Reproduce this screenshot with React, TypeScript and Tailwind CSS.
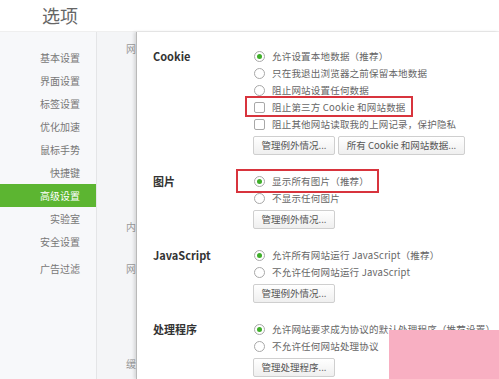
import React from "react";

const font = { fontFamily: '"Noto Sans CJK SC", "Noto Sans", sans-serif' };

function Radio({ checked }: { checked?: boolean }) {
  return (
    <span className="flex h-[11px] w-[11px] shrink-0 items-center justify-center rounded-full border border-[#a8a8a8] bg-white">
      {checked && <span className="h-[5px] w-[5px] rounded-full bg-[#3fae2a]" />}
    </span>
  );
}

function Check() {
  return <span className="h-[11px] w-[11px] shrink-0 rounded-[2px] border border-[#a8a8a8] bg-white" />;
}

function Row({ kind, checked, text, hl }: { kind: "r" | "c"; checked?: boolean; text: string; hl?: "a" | "b" }) {
  return (
    <div className="relative flex h-[17px] items-center gap-[7px] pl-[1px]">
      {kind === "r" ? <Radio checked={checked} /> : <Check />}
      <span className="whitespace-nowrap text-[9.5px] leading-none tracking-[0.2px] text-[#666]">{text}</span>
      {hl === "a" && (
        <div className="pointer-events-none absolute left-[-8px] top-[-3px] h-[21px] w-[168px] border-2 border-[#d8343d]" />
      )}
      {hl === "b" && (
        <div className="pointer-events-none absolute left-[-17px] top-[-4px] h-[24px] w-[143px] border-2 border-[#d8343d]" />
      )}
    </div>
  );
}

function Btn({ children, w }: { children: React.ReactNode; w: string }) {
  return (
    <div
      className={`flex h-[19px] items-center justify-center rounded-[2px] border border-[#cfcfcf] bg-gradient-to-b from-white to-[#efefef] text-[9.5px] leading-none text-[#555] ${w}`}
    >
      {children}
    </div>
  );
}

function Section({ label, children, buttons }: { label: string; children: React.ReactNode; buttons: React.ReactNode }) {
  return (
    <div className="flex">
      <div className="flex h-[17px] w-[100px] shrink-0 items-center text-[11px] font-semibold leading-none text-[#333]">
        {label}
      </div>
      <div className="flex flex-col">
        {children}
        <div className="mt-[3px] flex gap-[3px]">{buttons}</div>
      </div>
    </div>
  );
}

export default function App() {
  const nav = ["基本设置", "界面设置", "标签设置", "优化加速", "鼠标手势", "快捷键", "高级设置", "实验室", "安全设置"];
  return (
    <div className="relative h-[379px] w-[499px] overflow-hidden bg-white" style={font}>
      <div className="h-[32px] border-b border-[#efefef] pl-[42px] pt-[2px] text-[18px] leading-[26px] text-[#666]">选项</div>
      <div className="flex h-[347px]">
        <div className="w-[97px] shrink-0 border-r border-[#e4e5e7] bg-[#f7f8fa] pt-[14px]">
          {nav.map((n) => (
            <div
              key={n}
              className={`flex h-[23px] items-center justify-end pr-[16px] text-[10px] leading-none ${
                n === "高级设置" ? "bg-[#5cb531] text-white" : "text-[#777]"
              }`}
            >
              {n}
            </div>
          ))}
          <div className="mt-[4px] flex h-[23px] items-center justify-end pr-[16px] text-[10px] leading-none text-[#777]">
            广告过滤
          </div>
        </div>
        <div className="w-[39px] shrink-0 overflow-hidden whitespace-nowrap bg-[#f4f5f7] pl-[29px] text-[10px] leading-none text-[#999]">
          <div className="mt-[12px]">网</div>
          <div className="mt-[168px]">内</div>
          <div className="mt-[32px]">网</div>
          <div className="mt-[85px]">缓</div>
        </div>
        <div className="flex-1 border-l border-[#b9b9b9] bg-white pl-[16px] pt-[16px] shadow-[-2px_0_3px_rgba(0,0,0,0.12)]">
          <div className="flex flex-col gap-[18px]">
            <Section
              label="Cookie"
              buttons={
                <>
                  <Btn w="w-[82px]">管理例外情况...</Btn>
                  <Btn w="w-[127px]">所有 Cookie 和网站数据...</Btn>
                </>
              }
            >
              <Row kind="r" checked text="允许设置本地数据（推荐）" />
              <Row kind="r" text="只在我退出浏览器之前保留本地数据" />
              <Row kind="r" text="阻止网站设置任何数据" />
              <Row kind="c" text="阻止第三方 Cookie 和网站数据" hl="a" />
              <Row kind="c" text="阻止其他网站读取我的上网记录，保护隐私" />
            </Section>
            <Section label="图片" buttons={<Btn w="w-[82px]">管理例外情况...</Btn>}>
              <Row kind="r" checked text="显示所有图片（推荐）" hl="b" />
              <Row kind="r" text="不显示任何图片" />
            </Section>
            <Section label="JavaScript" buttons={<Btn w="w-[82px]">管理例外情况...</Btn>}>
              <Row kind="r" checked text="允许所有网站运行 JavaScript（推荐）" />
              <Row kind="r" text="不允许任何网站运行 JavaScript" />
            </Section>
            <Section label="处理程序" buttons={<Btn w="w-[82px]">管理处理程序...</Btn>}>
              <Row kind="r" checked text="允许网站要求成为协议的默认处理程序（推荐设置）" />
              <Row kind="r" text="不允许任何网站处理协议" />
            </Section>
          </div>
        </div>
      </div>
      <div className="absolute left-[389px] top-[330px] h-[49px] w-[110px] bg-[#f8afc2]" />
    </div>
  );
}
